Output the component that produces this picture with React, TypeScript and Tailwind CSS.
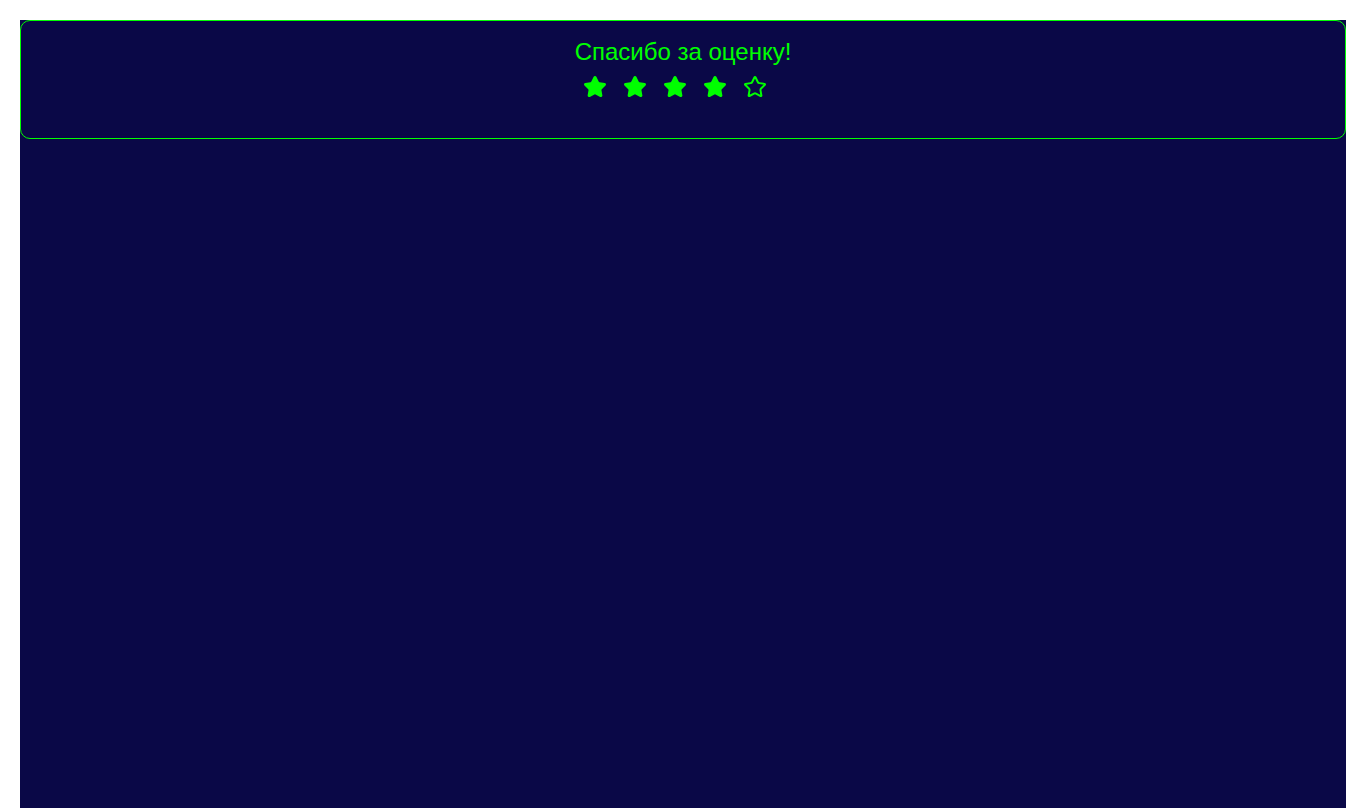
import { Star } from "lucide-react";

const rating = 4;

export default function App() {
  return (
    <div className="bg-white min-h-screen pt-5 px-5" style={{ fontFamily: '"Liberation Sans", Arial, sans-serif' }}>
      <div className="bg-[#0a0847] min-h-[788px]">
        <div className="border border-[#00ff00] rounded-[10px] pt-[17px] pb-[39px] flex flex-col items-center">
          <h2 className="text-[24px] leading-[28px] text-[#00ff00]">Спасибо за оценку!</h2>
          <div className="flex mt-[9px]">
            {[1, 2, 3, 4, 5].map((n) => (
              <span key={n} className="w-10 flex">
                <Star
                  size={24}
                  strokeWidth={2}
                  className="text-[#00ff00]"
                  fill={n <= rating ? "#00ff00" : "none"}
                />
              </span>
            ))}
          </div>
        </div>
      </div>
    </div>
  );
}
